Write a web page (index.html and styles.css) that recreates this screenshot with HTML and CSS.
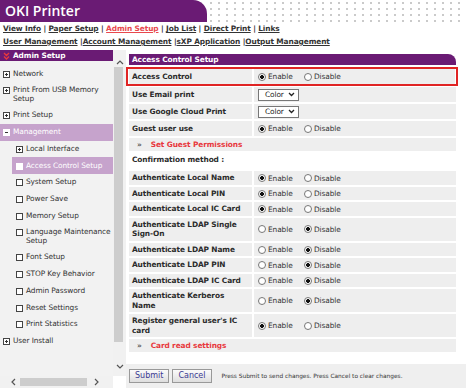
FILE: index.html
```html
<!DOCTYPE html>
<html lang="en">
<head>
    <meta charset="UTF-8">
    <title>OKI Printer - Access Control Setup</title>
    <link rel="stylesheet" href="styles.css">
</head>
<body>
    <div class="top">
        <div class="brand">OKI Printer</div>
        <div class="dots"></div>
    </div>

    <div class="nav">
        <div><a>View Info</a> | <a>Paper Setup</a> | <a class="cur">Admin Setup</a> | <a>Job List</a> | <a>Direct Print</a> | <a>Links</a></div>
        <div><a>User Management</a> |<a>Account Management</a> |<a>sXP Application</a> |<a>Output Management</a></div>
    </div>

    <div class="wrap">
        <!-- left tree menu -->
        <div class="side">
            <div class="side-frame">
                <div class="side-body">
                    <div class="side-head">
                        <svg class="chev" width="7" height="8" viewBox="0 0 7 8"><path d="M1 1l2.5 2.5L6 1M1 4.5L3.5 7 6 4.5" fill="none" stroke="#e8383d" stroke-width="1.4"/></svg>
                        Admin Setup
                    </div>
                    <ul class="tree">
                        <li><span class="ico plus"></span>Network</li>
                        <li><span class="ico plus"></span>Print From USB Memory Setup</li>
                        <li><span class="ico plus"></span>Print Setup</li>
                        <li class="open"><span class="ico minus"></span>Management</li>
                        <li class="sub"><span class="ico plus"></span>Local Interface</li>
                        <li class="sub sel-item"><span class="ico fill"></span>Access Control Setup</li>
                        <li class="sub"><span class="ico"></span>System Setup</li>
                        <li class="sub"><span class="ico"></span>Power Save</li>
                        <li class="sub"><span class="ico"></span>Memory Setup</li>
                        <li class="sub"><span class="ico"></span>Language Maintenance Setup</li>
                        <li class="sub"><span class="ico"></span>Font Setup</li>
                        <li class="sub"><span class="ico"></span>STOP Key Behavior</li>
                        <li class="sub"><span class="ico"></span>Admin Password</li>
                        <li class="sub"><span class="ico"></span>Reset Settings</li>
                        <li class="sub"><span class="ico"></span>Print Statistics</li>
                        <li><span class="ico plus"></span>User Install</li>
                    </ul>
                </div>
                <div class="vscroll">
                    <svg width="8" height="6" viewBox="0 0 8 6"><path d="M1 5l3-3 3 3" fill="none" stroke="#555" stroke-width="1.2"/></svg>
                    <div class="vthumb"></div>
                    <svg width="8" height="6" viewBox="0 0 8 6"><path d="M1 1l3 3 3-3" fill="none" stroke="#555" stroke-width="1.2"/></svg>
                </div>
            </div>
            <div class="hscroll">
                <svg width="6" height="8" viewBox="0 0 6 8"><path d="M5 1L2 4l3 3" fill="none" stroke="#555" stroke-width="1.2"/></svg>
                <div class="hthumb"></div>
                <svg width="6" height="8" viewBox="0 0 6 8"><path d="M1 1l3 3-3 3" fill="none" stroke="#555" stroke-width="1.2"/></svg>
            </div>
        </div>

        <!-- settings form -->
        <div class="main">
            <div class="content">
                <div class="panel-head">Access Control Setup</div>

                <div class="hl">
                    <div class="row wide">
                        <div class="lab">Access Control</div>
                        <div class="val"><span class="opt"><span class="radio on"></span>Enable</span><span class="opt"><span class="radio"></span>Disable</span></div>
                    </div>
                </div>

                <div class="row wide">
                    <div class="lab">Use Email print</div>
                    <div class="val"><span class="sel">Color<svg width="7" height="5" viewBox="0 0 7 5"><path d="M1 1l2.5 2.5L6 1" fill="none" stroke="#222" stroke-width="1.3"/></svg></span></div>
                </div>
                <div class="row wide">
                    <div class="lab">Use Google Cloud Print</div>
                    <div class="val"><span class="sel">Color<svg width="7" height="5" viewBox="0 0 7 5"><path d="M1 1l2.5 2.5L6 1" fill="none" stroke="#222" stroke-width="1.3"/></svg></span></div>
                </div>
                <div class="row wide">
                    <div class="lab">Guest user use</div>
                    <div class="val"><span class="opt"><span class="radio on"></span>Enable</span><span class="opt"><span class="radio"></span>Disable</span></div>
                </div>
                <div class="link-row"><span class="raquo">&raquo;</span><a>Set Guest Permissions</a></div>

                <div class="caption">Confirmation method :</div>

                <div class="row">
                    <div class="lab">Authenticate Local Name</div>
                    <div class="val"><span class="opt"><span class="radio on"></span>Enable</span><span class="opt"><span class="radio"></span>Disable</span></div>
                </div>
                <div class="row">
                    <div class="lab">Authenticate Local PIN</div>
                    <div class="val"><span class="opt"><span class="radio on"></span>Enable</span><span class="opt"><span class="radio"></span>Disable</span></div>
                </div>
                <div class="row">
                    <div class="lab">Authenticate Local IC Card</div>
                    <div class="val"><span class="opt"><span class="radio on"></span>Enable</span><span class="opt"><span class="radio"></span>Disable</span></div>
                </div>
                <div class="row">
                    <div class="lab">Authenticate LDAP Single Sign-On</div>
                    <div class="val"><span class="opt"><span class="radio"></span>Enable</span><span class="opt"><span class="radio on"></span>Disable</span></div>
                </div>
                <div class="row">
                    <div class="lab">Authenticate LDAP Name</div>
                    <div class="val"><span class="opt"><span class="radio"></span>Enable</span><span class="opt"><span class="radio on"></span>Disable</span></div>
                </div>
                <div class="row">
                    <div class="lab">Authenticate LDAP PIN</div>
                    <div class="val"><span class="opt"><span class="radio"></span>Enable</span><span class="opt"><span class="radio on"></span>Disable</span></div>
                </div>
                <div class="row">
                    <div class="lab">Authenticate LDAP IC Card</div>
                    <div class="val"><span class="opt"><span class="radio"></span>Enable</span><span class="opt"><span class="radio on"></span>Disable</span></div>
                </div>
                <div class="row">
                    <div class="lab">Authenticate Kerberos Name</div>
                    <div class="val"><span class="opt"><span class="radio"></span>Enable</span><span class="opt"><span class="radio on"></span>Disable</span></div>
                </div>
                <div class="row">
                    <div class="lab">Register general user's IC card</div>
                    <div class="val"><span class="opt"><span class="radio on"></span>Enable</span><span class="opt"><span class="radio"></span>Disable</span></div>
                </div>
                <div class="link-row"><span class="raquo">&raquo;</span><a>Card read settings</a></div>
            </div>

            <div class="actions">
                <button class="btn">Submit</button>
                <button class="btn">Cancel</button>
                <span class="hint">Press Submit to send changes. Press Cancel to clear changes.</span>
            </div>
        </div>
    </div>
</body>
</html>
```

FILE: styles.css
```css
body {
    margin: 0;
    width: 466px;
    height: 388px;
    overflow: hidden;
    font-family: "DejaVu Sans", Verdana, sans-serif;
    font-size: 7.4px;
    letter-spacing: -0.1px;
    color: #222;
    background: #fff;
}
a {
    color: inherit;
}

/* header */
.top {
    display: flex;
    height: 22px;
}
.brand {
    width: 207px;
    box-sizing: border-box;
    padding-left: 5px;
    background: #6a1b74;
    border-top-right-radius: 14px;
    color: #fff;
    font-family: "Open Sans", sans-serif;
    font-weight: 600;
    font-size: 14px;
    letter-spacing: 0;
    line-height: 22px;
}
.dots {
    flex: 1;
    background-image: radial-gradient(circle, #c9c9c9 0.7px, transparent 1.2px);
    background-size: 8px 6px;
}
.nav {
    padding-left: 3px;
    font-weight: bold;
    line-height: 13px;
    color: #333;
}
.nav a {
    text-decoration: underline;
}
.nav a.cur {
    color: #e8484d;
}

/* layout */
.wrap {
    display: flex;
    margin-top: 2px;
    height: 338px;
}

/* sidebar */
.side {
    width: 126px;
    display: flex;
    flex-direction: column;
}
.side-frame {
    flex: 1;
    display: flex;
    min-height: 0;
}
.side-body {
    width: 113px;
    background: #f2f2f2;
    overflow: hidden;
}
.side-head {
    height: 11px;
    background: #6a1b74;
    color: #fff;
    font-weight: bold;
    line-height: 11px;
    padding-left: 3px;
    display: flex;
    align-items: center;
    gap: 3px;
}
.tree {
    list-style: none;
    margin: 4.5px 0 0;
    padding: 0;
    color: #333;
}
.tree li {
    display: flex;
    align-items: flex-start;
    padding: 4.1px 0 4.1px 3px;
    line-height: 8.5px;
}
.tree li.sub {
    padding-left: 16px;
}
.tree li.open,
.tree li.sel-item {
    background: #c6a3cc;
    color: #fff;
}
.tree li.sel-item {
    margin-left: 12px;
    padding-left: 4px;
}
.ico {
    flex: none;
    width: 5px;
    height: 5px;
    margin: 1px 3px 0 0;
    border: 1px solid #444;
    background: #fff;
}
.ico.plus {
    background:
        linear-gradient(#333, #333) center / 3px 1px no-repeat,
        linear-gradient(#333, #333) center / 1px 3px no-repeat,
        #fff;
}
.ico.minus {
    background: linear-gradient(#333, #333) center / 3px 1px no-repeat, #fff;
    border-color: #fff;
}
.ico.fill {
    border-color: #fff;
    background: #fff;
}
.vscroll {
    width: 13px;
    background: #f1f1f1;
    display: flex;
    flex-direction: column;
    align-items: center;
    padding: 9px 0 6px;
    box-sizing: border-box;
}
.vthumb {
    width: 9px;
    margin: 2px 0 0 -3px;
    height: 275px;
    background: #cdcdcd;
}
.vscroll svg:last-child {
    margin-top: auto;
}
.hscroll {
    height: 12px;
    width: 113px;
    display: flex;
    align-items: center;
    padding-left: 10px;
    box-sizing: border-box;
    background: #f1f1f1;
}
.hthumb {
    width: 67px;
    height: 8px;
    margin: 0 7px 0 4px;
    background: #cdcdcd;
}

/* main form */
.main {
    flex: 1;
    display: flex;
    flex-direction: column;
}
.content {
    flex: 1;
    min-height: 0;
    padding: 4px 10px 0 3px;
}
.panel-head {
    height: 11px;
    line-height: 11px;
    padding-left: 3px;
    background: #6a1b74;
    border-top-right-radius: 8px;
    color: #fff;
    font-weight: bold;
}
.hl {
    margin: 2px -2px 1px -3px;
    padding: 0 1px;
    border: 2px solid #e02424;
}
.row {
    display: grid;
    grid-template-columns: 123px 1fr;
    gap: 2px;
    margin-bottom: 2px;
}
.hl .row {
    margin-bottom: 0;
}
.lab {
    background: #eee;
    font-weight: bold;
    color: #2b2b2b;
    padding: 2px 3px;
    line-height: 9.5px;
    display: flex;
    align-items: center;
}
.row.wide .lab {
    padding-top: 2.8px;
    padding-bottom: 2.8px;
}
.val {
    background: #eee;
    padding-left: 4px;
    display: flex;
    align-items: center;
    color: #333;
}
.opt {
    width: 46px;
    display: flex;
    align-items: center;
}
.radio {
    width: 6px;
    height: 6px;
    margin-right: 2px;
    border: 1px solid #777;
    border-radius: 50%;
    background: #fff;
}
.radio.on {
    background: radial-gradient(circle, #111 1.6px, #fff 2.2px);
}
.sel {
    width: 41px;
    height: 12px;
    box-sizing: border-box;
    border: 1px solid #777;
    background: #fff;
    padding: 0 3px 0 6px;
    display: flex;
    align-items: center;
    justify-content: space-between;
    color: #222;
}
.link-row {
    background: #eee;
    padding: 2px 0 2px 8px;
    margin-bottom: 2px;
    line-height: 9px;
    font-weight: bold;
}
.raquo {
    color: #555;
    margin-right: 9px;
}
.link-row a {
    color: #e8383d;
}
.caption {
    font-weight: bold;
    color: #2b2b2b;
    padding: 2px 3px 7px;
    line-height: 9px;
}

/* buttons */
.actions {
    flex: none;
    height: 24px;
    background: #efefef;
    display: flex;
    align-items: center;
    padding-left: 3px;
    gap: 3px;
}
.btn {
    height: 14px;
    padding: 0 5px;
    border: 1px solid #999;
    background: linear-gradient(#fbfbfb, #dedede);
    color: #3b3a92;
    font-family: "DejaVu Sans", Verdana, sans-serif;
    font-size: 8px;
    line-height: 12px;
}
.hint {
    margin-left: 7px;
    font-size: 5.85px;
    letter-spacing: 0;
    color: #333;
}
```
